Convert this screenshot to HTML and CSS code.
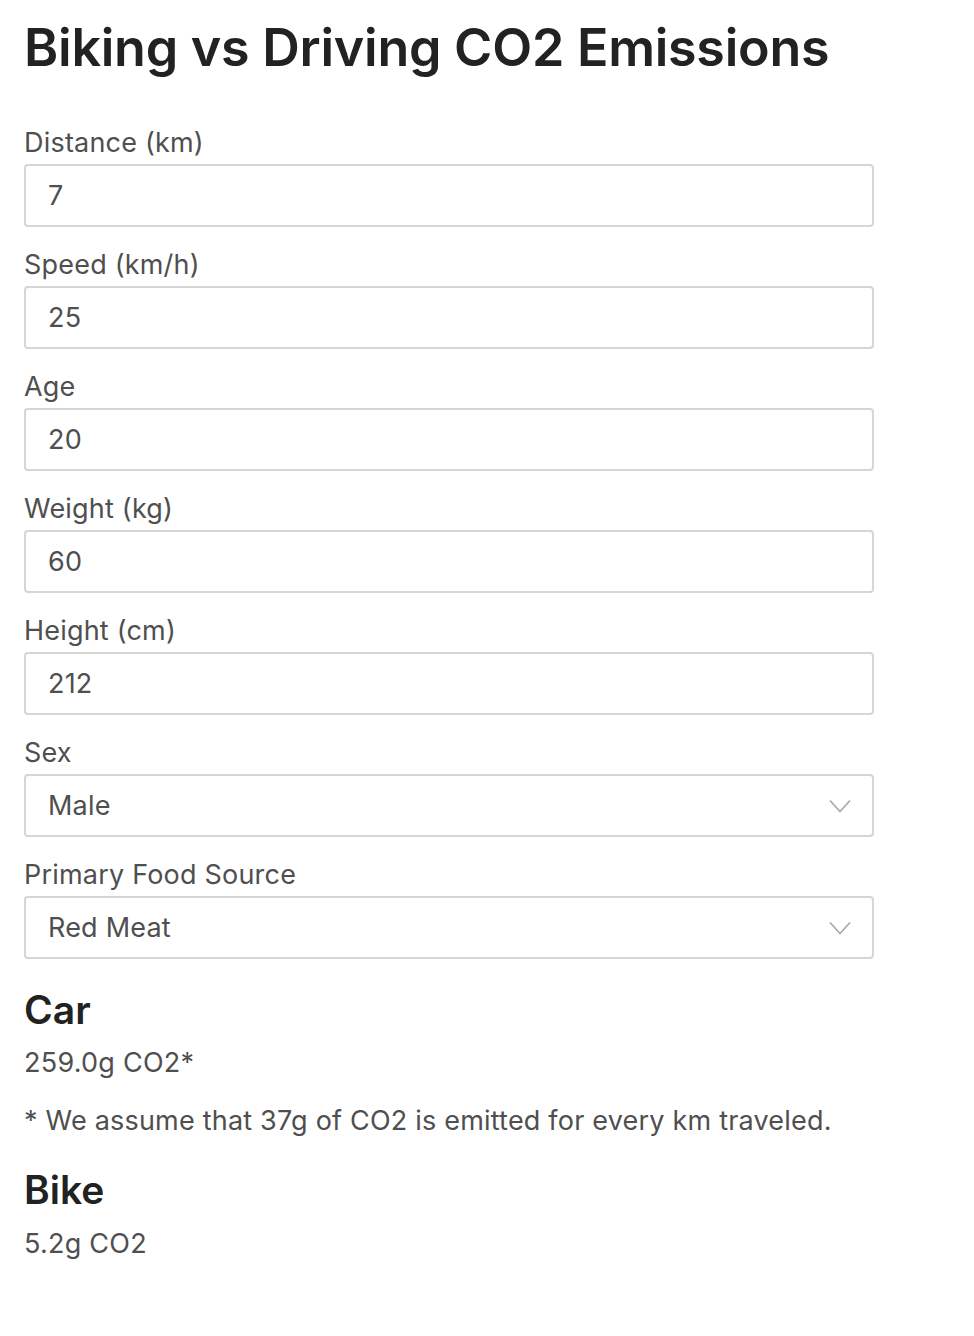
FILE: index.html
```html
<!DOCTYPE html>
<html>
<head>
<meta charset="utf-8">
<link rel="stylesheet" href="styles.css">
</head>
<body>
<div class="page">
  <h1 class="title">Biking vs Driving CO2 Emissions</h1>
  <div class="field">
    <label class="label">Distance (km)</label>
    <div class="box"><span class="value">7</span></div>
  </div>
  <div class="field">
    <label class="label">Speed (km/h)</label>
    <div class="box"><span class="value">25</span></div>
  </div>
  <div class="field">
    <label class="label">Age</label>
    <div class="box"><span class="value">20</span></div>
  </div>
  <div class="field">
    <label class="label">Weight (kg)</label>
    <div class="box"><span class="value">60</span></div>
  </div>
  <div class="field">
    <label class="label">Height (cm)</label>
    <div class="box"><span class="value">212</span></div>
  </div>
  <div class="field">
    <label class="label">Sex</label>
    <div class="box select"><span class="value">Male</span>
      <svg class="chev" width="22" height="14" viewBox="0 0 22 14"><path d="M1 1.5 L11 12.5 L21 1.5" fill="none" stroke="#a8a8a8" stroke-width="1.6"/></svg>
    </div>
  </div>
  <div class="field">
    <label class="label">Primary Food Source</label>
    <div class="box select"><span class="value">Red Meat</span>
      <svg class="chev" width="22" height="14" viewBox="0 0 22 14"><path d="M1 1.5 L11 12.5 L21 1.5" fill="none" stroke="#a8a8a8" stroke-width="1.6"/></svg>
    </div>
  </div>
  <h2 class="heading car">Car</h2>
  <p class="result">259.0g CO2*</p>
  <p class="note">* We assume that 37g of CO2 is emitted for every km traveled.</p>
  <h2 class="heading bike">Bike</h2>
  <p class="result">5.2g CO2</p>
</div>
</body>
</html>
```
FILE: styles.css
```css
html, body {
  margin: 0;
  padding: 0;
  background: #ffffff;
}
.page {
  padding: 17px 24px 0 24px;
  width: 850px;
  font-family: Inter, "Noto Sans", sans-serif;
  color: #4d4d4d;
}
.title {
  margin: 0 0 45px 0;
  font-size: 52px;
  line-height: 62px;
  font-weight: 600;
  color: #222222;
  white-space: nowrap;
  letter-spacing: -0.25px;
}
.field {
  display: flex;
  flex-direction: column;
  margin-bottom: 19px;
}
.label {
  font-size: 27px;
  line-height: 38px;
  margin-bottom: 2px;
  color: #4f4f4f;
  letter-spacing: 0.2px;
}
.box {
  box-sizing: border-box;
  height: 63px;
  border: 2px solid #d6d6d6;
  border-radius: 4px;
  padding: 0 22px;
  display: flex;
  align-items: center;
  justify-content: space-between;
}
.value {
  font-size: 27px;
  color: #4f4f4f;
  letter-spacing: 0.2px;
}
.chev {
  margin-right: -1px;
}
.field:last-of-type {
  margin-bottom: 0;
}
.heading {
  margin: 0;
  font-size: 39px;
  line-height: 46px;
  font-weight: 600;
  color: #222222;
}
.car {
  margin-top: 28px;
}
.result {
  margin: 11px 0 0 0;
  font-size: 27px;
  line-height: 38px;
  color: #4f4f4f;
  letter-spacing: 0.25px;
}
.note {
  margin: 20px 0 0 0;
  font-size: 27px;
  line-height: 38px;
  color: #4f4f4f;
  letter-spacing: 0.2px;
}
.bike {
  margin-top: 27px;
}
.bike + .result {
  margin-top: 12px;
}
```
